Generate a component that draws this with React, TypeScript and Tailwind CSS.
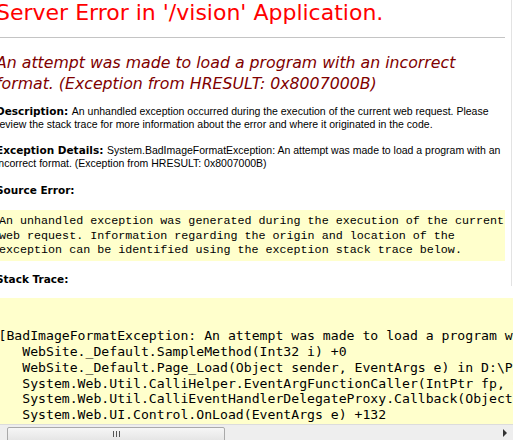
import React from 'react';

const verdana = "font-['DejaVu_Sans','Verdana',sans-serif]";
const arial = "font-['Liberation_Sans','Arial',sans-serif]";

const stackLines = [
    '[BadImageFormatException: An attempt was made to load a program with an incorrect format. (Exception from HRESULT: 0x8007000B)]',
    '   WebSite._Default.SampleMethod(Int32 i) +0',
    '   WebSite._Default.Page_Load(Object sender, EventArgs e) in D:\\Projects\\vision\\Default.aspx.cs:25',
    '   System.Web.Util.CalliHelper.EventArgFunctionCaller(IntPtr fp, Object o, Object t, EventArgs e) +14',
    '   System.Web.Util.CalliEventHandlerDelegateProxy.Callback(Object sender, EventArgs e) +35',
    '   System.Web.UI.Control.OnLoad(EventArgs e) +132',
    '   System.Web.UI.Control.LoadRecursive() +66',
    '   System.Web.UI.Page.ProcessRequestMain(Boolean includeStagesBeforeAsyncPoint, Boolean includeStagesAfterAsyncPoint) +2428',
];

const Label = ({ children }: { children: React.ReactNode }) => (
    <b className={`${verdana} font-bold text-black`}>{children}</b>
);

const App = () => {
    return (
        <div className="relative h-[440px] w-[513px] overflow-hidden bg-white text-black">
            {/* upper part, ends at the window's right border */}
            <div className="w-[512px] border-r border-[#e3e3e3]">
                <div className="ml-[-4px] pr-[6px]">
                    <h1 className={`${verdana} text-[22px] leading-[26px] text-[#ff0000] whitespace-nowrap`}>
                        Server Error in '/vision' Application.
                    </h1>
                    <div className="mt-[11px] h-px bg-[#c4c4c4]" />

                    <h2 className={`${verdana} mt-[14px] text-[15.75px] italic leading-[21px] text-[#800000] whitespace-nowrap`}>
                        An attempt was made to load a program with an incorrect<br />
                        format. (Exception from HRESULT: 0x8007000B)
                    </h2>

                    <p className={`${arial} mt-[11px] text-[10.5px] leading-[13px] whitespace-nowrap`}>
                        <Label>Description: </Label>
                        An unhandled exception occurred during the execution of the current web request. Please<br />
                        review the stack trace for more information about the error and where it originated in the code.
                    </p>

                    <p className={`${arial} mt-[13px] text-[10.5px] leading-[13px] whitespace-nowrap`}>
                        <Label>Exception Details: </Label>
                        System.BadImageFormatException: An attempt was made to load a program with an<br />
                        incorrect format. (Exception from HRESULT: 0x8007000B)
                    </p>

                    <p className={`${arial} mt-[14px] text-[10.5px] leading-[13px]`}>
                        <Label>Source Error:</Label>
                    </p>

                    <div className="mt-[13px] bg-[#ffffcc] pl-[3px] pt-[4px] pb-[3px]">
                        <code className="block font-['Liberation_Mono','Courier_New',monospace] text-[11.7px] leading-[14.7px] whitespace-nowrap">
                            An unhandled exception was generated during the execution of the current<br />
                            web request. Information regarding the origin and location of the<br />
                            exception can be identified using the exception stack trace below.
                        </code>
                    </div>

                    <p className={`${arial} mt-[12px] text-[10.5px] leading-[13px]`}>
                        <Label>Stack Trace:</Label>
                    </p>
                </div>
            </div>

            <div className="ml-[-4px] mt-[12px] w-[900px] bg-[#ffffcc] pl-[2.5px] pt-[30px] pb-4">
                <pre className="font-['DejaVu_Sans_Mono','Consolas',monospace] text-[13.15px] leading-[15.8px] text-black">
                    {stackLines.join('\n')}
                </pre>
            </div>

            {/* horizontal scrollbar */}
            <div className="absolute bottom-0 left-0 h-[16px] w-[513px] border-t border-[#dcdcdc] bg-[#eeeeee]">
                <div className="absolute left-[7px] top-[2px] flex h-[16px] w-[218px] items-start justify-center rounded-[2px] border border-[#a9a9a9] bg-gradient-to-b from-[#f6f6f6] to-[#e3e3e3] pt-[3px]">
                    <div className="flex gap-[2px]">
                        <span className="h-[6px] w-px bg-[#555]" />
                        <span className="h-[6px] w-px bg-[#555]" />
                        <span className="h-[6px] w-px bg-[#555]" />
                    </div>
                </div>
                <svg className="absolute right-[5px] top-[4px]" width="5" height="8" viewBox="0 0 5 8">
                    <path d="M0 0 L4 4 L0 8 Z" fill="#333" />
                </svg>
            </div>
        </div>
    );
};

export default App;
